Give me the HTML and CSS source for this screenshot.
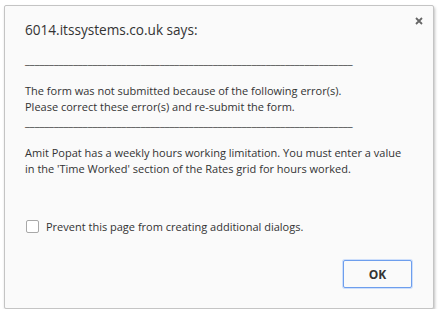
FILE: index.html
```html
<!DOCTYPE html>
<html lang="en">
<head>
<meta charset="UTF-8">
<meta name="viewport" content="width=device-width, initial-scale=1.0">
<title>Alert</title>
<link rel="stylesheet" href="styles.css">
</head>
<body>
<div class="dialog">
    <svg class="close" width="8" height="8" viewBox="0 0 8 8">
        <path d="M1 1L7 7M7 1L1 7" stroke="#666" stroke-width="1.8"/>
    </svg>
    <div class="title">6014.itssystems.co.uk says:</div>
    <div class="message">
        <div class="rule">____________________________________________________________________</div>
        <div class="blank"></div>
        <div>The form was not submitted because of the following error(s).</div>
        <div>Please correct these error(s) and re-submit the form.</div>
        <div class="rule">____________________________________________________________________</div>
        <div class="blank"></div>
        <div>Amit Popat has a weekly hours working limitation. You must enter a value</div>
        <div>in the 'Time Worked' section of the Rates grid for hours worked.</div>
    </div>
    <label class="suppress">
        <span class="checkbox"></span>
        <span>Prevent this page from creating additional dialogs.</span>
    </label>
    <div class="buttons">
        <button class="ok">OK</button>
    </div>
</div>
</body>
</html>
```

FILE: styles.css
```css
body {
    margin: 0;
    background-color: #fff;
    font-family: "Open Sans", Arial, sans-serif;
    color: #333;
}
.dialog {
    position: relative;
    margin: 5px 0 0 4px;
    width: 428px;
    height: 302px;
    background-color: #fafafa;
    border: 1px solid #c4c4c4;
    border-radius: 2px;
    box-shadow: 1px 2px 3px rgba(0, 0, 0, 0.25);
    display: flex;
    flex-direction: column;
}
.close {
    position: absolute;
    top: 11px;
    right: 10px;
}
.title {
    font-size: 13.6px;
    line-height: 20px;
    padding: 14px 20px 0 20px;
    color: #333;
}
.message {
    font-size: 11px;
    line-height: 15.5px;
    padding: 12px 20px 0 20px;
    white-space: nowrap;
}
.rule {
    width: max-content;
}
.blank {
    height: 15.5px;
}
.suppress {
    display: flex;
    align-items: center;
    gap: 7px;
    font-size: 11px;
    padding: 0 21px;
    margin-top: 43px;
}
.checkbox {
    width: 11px;
    height: 11px;
    border: 1px solid #a8a8a8;
    border-radius: 2px;
    background-color: #fff;
}
.buttons {
    display: flex;
    justify-content: flex-end;
    margin-top: auto;
    padding: 0 21px 20px 0;
}
.ok {
    width: 69px;
    height: 28px;
    font-family: "Open Sans", Arial, sans-serif;
    font-size: 12px;
    font-weight: bold;
    color: #333;
    background-color: #fafafa;
    border: 1px solid #6d9eed;
    border-radius: 2px;
    box-shadow: 0 0 0 1px rgba(77, 144, 254, 0.25);
}
```
